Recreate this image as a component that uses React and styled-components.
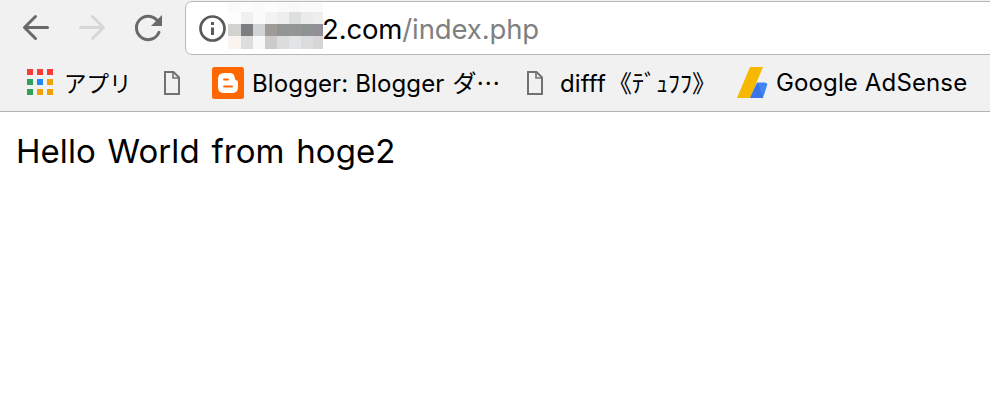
import React from "react";
import styled, { createGlobalStyle } from "styled-components";

const GlobalStyle = createGlobalStyle`
  * { box-sizing: border-box; }
  body { margin: 0; background: #fff; overflow: hidden; }
`;

const Browser = styled.div`
  width: 990px;
  height: 416px;
  overflow: hidden;
  background: #fff;
  color: #000;
`;

const Chrome = styled.header`
  height: 112px;
  background: #f1f1f1;
  border-bottom: 1px solid #b3b3b3;
`;

const Toolbar = styled.div`
  display: flex;
  height: 55px;
  padding: 1px 0 0 20px;
`;

const NavButton = styled.button`
  width: 32px;
  height: 32px;
  margin: 11px ${(p) => p.$gap}px 0 0;
  padding: 0;
  border: 0;
  background: none;
  color: ${(p) => (p.$disabled ? "#d7d7d7" : "#696969")};
  svg { display: block; }
`;

const AddressBar = styled.div`
  display: flex;
  flex: none;
  width: 840px;
  height: 54px;
  padding-left: 12px;
  border: 1px solid #b8b8b8;
  border-radius: 7px;
  background: #fff;
`;

const InfoIcon = styled.svg`
  flex: none;
  width: 30px;
  height: 30px;
  margin-top: 12px;
`;

const Mosaic = styled.div`
  display: grid;
  flex: none;
  grid-template-columns: 13px 12px 12px 12px 12px 12px 12px 10px;
  grid-template-rows: 9px 12px 12px 13px;
  margin-top: 1px;
`;

const Tile = styled.span`
  background: ${(p) => p.$tone};
`;

const Url = styled.div`
  margin-left: -1px;
  font: 400 27.5px/54px Inter, sans-serif;
  letter-spacing: -0.13px;
  white-space: nowrap;
`;

const UrlPath = styled.span`
  color: #808080;
`;

const Bookmarks = styled.nav`
  display: flex;
  align-items: center;
  height: 56px;
  padding-left: 26px;
`;

const Bookmark = styled.a`
  display: flex;
  flex: none;
  align-items: center;
  width: ${(p) => p.$width}px;
  height: 56px;
  white-space: nowrap;
  svg { flex: none; display: block; }
`;

const Label = styled.span`
  margin-left: ${(p) => p.$gap}px;
  font: 400 24px/36px Inter, "Noto Sans CJK JP", sans-serif;
  letter-spacing: 0.13px;
`;

const Kana = styled.span`
  margin-left: ${(p) => p.$shift || 0}px;
  font-family: "Noto Sans CJK JP", sans-serif;
  font-size: ${(p) => p.$size || 24}px;
  letter-spacing: 0;
`;

const Page = styled.main`
  padding: 15px 16px;
  font: 400 33px/48px Inter, sans-serif;
  letter-spacing: 0.05px;
  word-spacing: 2.5px;
  white-space: nowrap;
`;

const tiles = [
  "#fafafa", "#fcfcfc", "#fafafa", "#fcfcfc", "#fafafa", "#f8f8f8", "#fafafa", "#fafafa",
  "#fdfdfd", "#f0f0f0", "#fbfbfb", "#f3f3f3", "#eeeeee", "#dddedf", "#ebebea", "#eeeeee",
  "#d2d2ce", "#7c7e80", "#d2d3d6", "#a09b99", "#929594", "#929695", "#909393", "#929096",
  "#faf4f0", "#dddddd", "#f8f8f8", "#cbcbcc", "#dcdcdc", "#e2e5e5", "#dcdcdc", "#d8d5d8",
];

const appColors = [
  "#fb3b36", "#fb3b36", "#fb3b36",
  "#31a05b", "#2189f3", "#f0a106",
  "#31a05b", "#f0a106", "#f0a106",
];

const PageIcon = () => (
  <svg width="16" height="24" viewBox="0 0 16 24" fill="none" stroke="#717171" strokeWidth="2">
    <path d="M1 1H9.5L15 6.5V23H1Z" />
    <path d="M9 1V7H15" strokeWidth="1.6" />
  </svg>
);

export default function App() {
  return (
    <>
      <GlobalStyle />
      <Browser>
        <Chrome>
          <Toolbar>
            <NavButton $gap={24} aria-label="Back">
              <svg width="32" height="32" fill="none" stroke="currentColor" strokeWidth="3" strokeLinecap="round" strokeLinejoin="round">
                <path d="M27.5 15.5H5M15.5 4.5L4.5 15.5L15.5 26.5" />
              </svg>
            </NavButton>
            <NavButton $gap={24} $disabled aria-label="Forward">
              <svg width="32" height="32" fill="none" stroke="currentColor" strokeWidth="3" strokeLinecap="round" strokeLinejoin="round">
                <path d="M4.5 15.5H27M16.5 4.5L27.5 15.5L16.5 26.5" />
              </svg>
            </NavButton>
            <NavButton $gap={21} aria-label="Reload">
              <svg width="32" height="32" fill="none" stroke="currentColor" strokeWidth="3" strokeLinecap="round">
                <path d="M27 20.3A11.7 11.7 0 1 1 25 8.3" />
                <path d="M30 3V14H19Z" fill="currentColor" stroke="none" />
              </svg>
            </NavButton>
            <AddressBar>
              <InfoIcon viewBox="0 0 30 30">
                <circle cx="14.5" cy="14.5" r="12" fill="none" stroke="#5a5a5a" strokeWidth="2.7" />
                <path d="M13 8H16V11H13ZM13 13.5H16V21H13Z" fill="#5a5a5a" />
              </InfoIcon>
              <Mosaic>
                {tiles.map((tone, i) => <Tile key={i} $tone={tone} />)}
              </Mosaic>
              <Url>2.com<UrlPath>/index.php</UrlPath></Url>
            </AddressBar>
          </Toolbar>
          <Bookmarks>
            <Bookmark $width={138}>
              <svg width="28" height="28">
                {appColors.map((fill, i) => (
                  <rect key={i} x={1 + (i % 3) * 10} y={Math.floor(i / 3) * 10} width="6" height="6" fill={fill} />
                ))}
              </svg>
              <Label $gap={10}><Kana $size={22.5}>アプリ</Kana></Label>
            </Bookmark>
            <Bookmark $width={48}><PageIcon /></Bookmark>
            <Bookmark $width={315}>
              <svg width="32" height="32">
                <rect width="32" height="32" rx="2.5" fill="#ff6700" />
                <path d="M12 6H17.5Q22.5 6 22.8 11Q22.8 13 24.3 13.2Q26 13.3 26 15V20Q26 26 20 26H12Q6 26 6 20V12Q6 6 12 6Z" fill="#fff" />
                <path d="M12 12.5H16M12 19.5H20" stroke="#ff6700" strokeWidth="1.8" strokeLinecap="round" />
              </svg>
              <Label $gap={8}>Blogger: Blogger <Kana $shift={1}>ダ⋯</Kana></Label>
            </Bookmark>
            <Bookmark $width={209}>
              <PageIcon />
              <Label $gap={17}>difff<Kana $shift={2}>《ﾃﾞｭﾌﾌ》</Kana></Label>
            </Bookmark>
            <Bookmark $width={240}>
              <svg width="32" height="32">
                <path d="M21 15.5H28.5Q32 15.5 31 18.5L28 28Q26.5 31 24 31H13Z" fill="#4285f4" />
                <path d="M22 16L27.5 31H14Z" fill="#3974e8" />
                <path d="M14 0H27L14 31H1Z" fill="#f6b900" />
              </svg>
              <Label $gap={8}>Google AdSense</Label>
            </Bookmark>
          </Bookmarks>
        </Chrome>
        <Page>Hello World from hoge2</Page>
      </Browser>
    </>
  );
}
